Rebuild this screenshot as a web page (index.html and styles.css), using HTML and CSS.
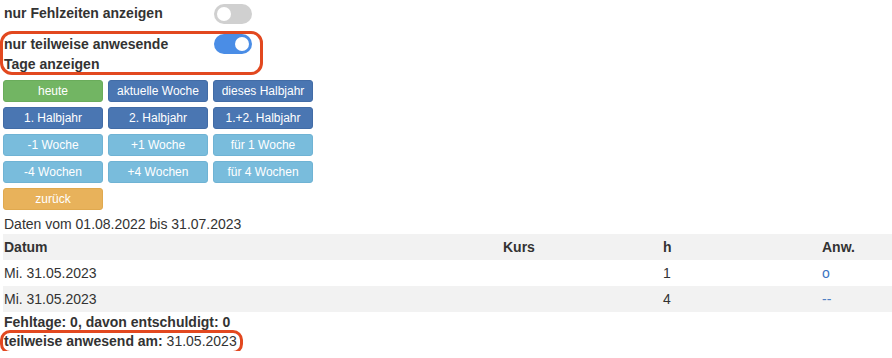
FILE: index.html
```html
<!DOCTYPE html>
<html lang="de">

<head>
    <meta charset="UTF-8">
    <meta name="viewport" content="width=device-width, initial-scale=1.0">
    <title>Fehlzeiten</title>
    <link rel="stylesheet" href="styles.css">
</head>

<body>
    <div class="switch-row first">
        <span class="switch-label">nur Fehlzeiten anzeigen</span>
        <span class="switch"></span>
    </div>

    <div class="switch-row second">
        <span class="switch-label">nur teilweise anwesende Tage anzeigen</span>
        <span class="switch on"></span>
        <span class="mark mark-top"></span>
    </div>

    <div class="btn-grid">
        <button class="btn btn-green">heute</button>
        <button class="btn btn-blue">aktuelle Woche</button>
        <button class="btn btn-blue">dieses Halbjahr</button>
        <button class="btn btn-blue">1. Halbjahr</button>
        <button class="btn btn-blue">2. Halbjahr</button>
        <button class="btn btn-blue">1.+2. Halbjahr</button>
        <button class="btn btn-light">-1 Woche</button>
        <button class="btn btn-light">+1 Woche</button>
        <button class="btn btn-light">für 1 Woche</button>
        <button class="btn btn-light">-4 Wochen</button>
        <button class="btn btn-light">+4 Wochen</button>
        <button class="btn btn-light">für 4 Wochen</button>
        <button class="btn btn-orange">zurück</button>
    </div>

    <div class="range">Daten vom 01.08.2022 bis 31.07.2023</div>

    <table class="absences">
        <colgroup>
            <col class="col-date">
            <col class="col-course">
            <col class="col-hour">
            <col>
        </colgroup>
        <thead>
            <tr>
                <th>Datum</th>
                <th>Kurs</th>
                <th>h</th>
                <th>Anw.</th>
            </tr>
        </thead>
        <tbody>
            <tr>
                <td>Mi. 31.05.2023</td>
                <td></td>
                <td>1</td>
                <td><a href="#">o</a></td>
            </tr>
            <tr>
                <td>Mi. 31.05.2023</td>
                <td></td>
                <td>4</td>
                <td><a href="#" class="dash">--</a></td>
            </tr>
        </tbody>
    </table>

    <div class="summary">Fehltage: 0, davon entschuldigt: 0</div>
    <div class="partial">
        <b>teilweise anwesend am:</b> 31.05.2023
        <span class="mark mark-bottom"></span>
    </div>
</body>

</html>
```

FILE: styles.css
```css
body {
    font-family: "Liberation Sans", Arial, sans-serif;
    font-size: 14px;
    line-height: 20px;
    margin: 0;
    padding: 0 0 0 3px;
    color: #333;
    background-color: #fff;
}

.switch-row {
    position: relative;
    display: flex;
    justify-content: space-between;
    align-items: flex-start;
    width: 248px;
    padding-left: 1px;
}

.switch-row.first {
    margin-top: 3px;
}

.switch-row.second {
    margin-top: 10px;
}

.switch-label {
    font-weight: bold;
    width: 180px;
}

.switch {
    position: relative;
    display: inline-block;
    width: 38px;
    height: 20px;
    margin-top: 1px;
    border-radius: 10px;
    background-color: #d0d0d0;
}

.switch::after {
    content: "";
    position: absolute;
    top: 3px;
    left: 3px;
    width: 14px;
    height: 14px;
    border-radius: 50%;
    background-color: #fff;
}

.switch.on {
    margin-top: 0;
    background-color: #4a8de6;
}

.switch.on::after {
    left: 21px;
}

/* red annotation frames */
.mark {
    position: absolute;
    border: 3px solid #e2481f;
    border-radius: 12px;
    pointer-events: none;
}

.mark-top {
    left: -3px;
    top: -3px;
    width: 257px;
    height: 38px;
}

.mark-bottom {
    left: -3px;
    top: -1px;
    width: 237px;
    height: 18px;
    border-radius: 10px;
}

.btn-grid {
    display: grid;
    grid-template-columns: repeat(3, 100px);
    grid-auto-rows: 22px;
    gap: 5px;
    margin-top: 6px;
}

.btn {
    font-family: "Liberation Sans", Arial, sans-serif;
    font-size: 12px;
    color: #fff;
    border: 1px solid transparent;
    border-radius: 3px;
    padding: 0;
    cursor: pointer;
}

.btn-green {
    background-color: #72b563;
    border-color: #6aac5b;
}

.btn-blue {
    background-color: #4a76b2;
    border-color: #426ca6;
}

.btn-light {
    background-color: #79bcdc;
    border-color: #6fb3d4;
}

.btn-orange {
    background-color: #e8b25b;
    border-color: #e0a94f;
}

.range {
    margin-top: 4px;
    padding-left: 1px;
}

.absences {
    width: 100%;
    table-layout: fixed;
    border-collapse: collapse;
    margin-top: 0;
}

.col-date {
    width: 497px;
}

.col-course {
    width: 160px;
}

.col-hour {
    width: 159px;
}

.absences th,
.absences td {
    text-align: left;
    padding: 3px 1px 3px 1px;
    height: 20px;
}

.absences th:nth-child(2) {
    padding-left: 3px;
}

.absences th:nth-child(3),
.absences td:nth-child(3),
.absences th:nth-child(4),
.absences td:nth-child(4) {
    padding-left: 3px;
}

.absences thead tr,
.absences tbody tr:nth-child(even) {
    background-color: #f2f2f2;
}

.absences a {
    color: #3a74c2;
    text-decoration: none;
}

.absences a.dash {
    color: #4f80c4;
}

.summary {
    font-weight: bold;
    padding-left: 1px;
}

.partial {
    position: relative;
    padding-left: 1px;
    margin-top: -1px;
}
```
